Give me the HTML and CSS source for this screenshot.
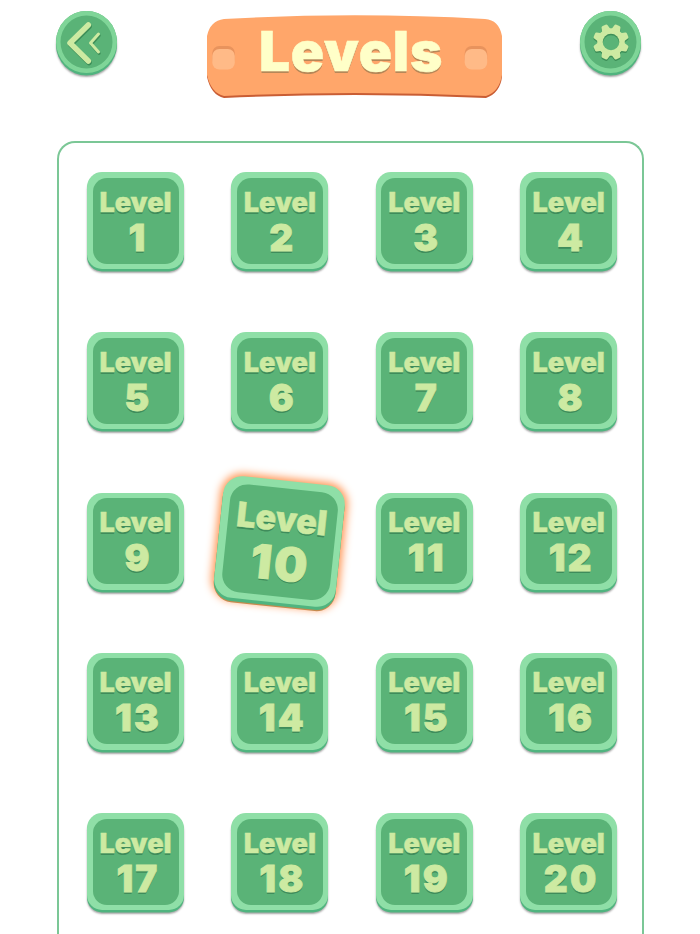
FILE: index.html
```
<!DOCTYPE html>
<html lang="en">
<head>
    <meta charset="UTF-8">
    <title>Levels</title>
    <link rel="stylesheet" href="styles.css">
</head>
<body>
    <header class="top-bar">
        <button class="round-btn" aria-label="Back">
            <svg width="61" height="62" viewBox="0 0 61 62" fill="none" stroke-linecap="round" stroke-linejoin="round">
                <g stroke="#3d8e58" transform="translate(0.7 1.5)">
                    <path d="M32.300 14L14 32L32.300 50" stroke-width="5.500"/>
                    <path d="M42.500 23L34.500 32L42.500 41" stroke-width="3"/>
                </g>
                <g stroke="#cdeaa2">
                    <path d="M32.300 14L14 32L32.300 50" stroke-width="5.500"/>
                    <path d="M42.500 23L34.500 32L42.500 41" stroke-width="3"/>
                </g>
            </svg>
        </button>
        <div class="banner">
            <svg class="banner-board" width="296" height="85" viewBox="0 0 296 85">
                <path d="M17 8Q148 -1 278 8Q295 9 295 33V63Q293 79 279 84Q148 78 17 84Q4 81 0 63V33Q1 10 17 8Z" fill="#c95d34"/>
                <path d="M17 5Q148 -2.500 278 5Q292 6 295 22V61Q292 78 279 82Q148 76 17 82Q4 79 0 61V22Q3 7 17 5Z" fill="#ffa66a"/>
                <rect x="5.300" y="32" width="22.500" height="20" rx="7" fill="#e8935d"/>
                <rect x="5.300" y="35" width="22.500" height="20.500" rx="7" fill="#ffba87"/>
                <rect x="257.700" y="32" width="22.500" height="20" rx="7" fill="#e8935d"/>
                <rect x="257.700" y="35" width="22.500" height="20.500" rx="7" fill="#ffba87"/>
            </svg>
            <h1 class="banner-title">Levels</h1>
        </div>
        <button class="round-btn" aria-label="Settings">
            <svg width="61" height="62" viewBox="0 0 61 62">
                <defs>
                    <mask id="hole">
                        <rect width="61" height="62" fill="#fff"/>
                        <circle cx="31" cy="31" r="8.300" fill="#000"/>
                    </mask>
                    <g id="gear" mask="url(#hole)">
                        <circle cx="31" cy="31" r="13.800"/>
                        <path id="tooth" d="M26.500 19L27.700 14.200Q28 13 29.500 13H32.500Q34 13 34.300 14.200L35.500 19V43L34.300 47.800Q34 49 32.500 49H29.500Q28 49 27.700 47.800L26.500 43Z" transform="rotate(22.5 31 31)"/>
                        <use href="#tooth" transform="rotate(45 31 31)"/>
                        <use href="#tooth" transform="rotate(90 31 31)"/>
                        <use href="#tooth" transform="rotate(135 31 31)"/>
                    </g>
                </defs>
                <use href="#gear" fill="#3d8e58" y="1.500"/>
                <use href="#gear" fill="#cdeaa2"/>
            </svg>
        </button>
    </header>
    <main class="levels">
        <button class="level"><span class="face"><span class="label">Level</span><span class="num">1</span></span></button>
        <button class="level"><span class="face"><span class="label">Level</span><span class="num">2</span></span></button>
        <button class="level"><span class="face"><span class="label">Level</span><span class="num">3</span></span></button>
        <button class="level"><span class="face"><span class="label">Level</span><span class="num">4</span></span></button>
        <button class="level"><span class="face"><span class="label">Level</span><span class="num">5</span></span></button>
        <button class="level"><span class="face"><span class="label">Level</span><span class="num">6</span></span></button>
        <button class="level"><span class="face"><span class="label">Level</span><span class="num">7</span></span></button>
        <button class="level"><span class="face"><span class="label">Level</span><span class="num">8</span></span></button>
        <button class="level"><span class="face"><span class="label">Level</span><span class="num">9</span></span></button>
        <button class="level active"><span class="face"><span class="label">Level</span><span class="num">10</span></span></button>
        <button class="level"><span class="face"><span class="label">Level</span><span class="num">11</span></span></button>
        <button class="level"><span class="face"><span class="label">Level</span><span class="num">12</span></span></button>
        <button class="level"><span class="face"><span class="label">Level</span><span class="num">13</span></span></button>
        <button class="level"><span class="face"><span class="label">Level</span><span class="num">14</span></span></button>
        <button class="level"><span class="face"><span class="label">Level</span><span class="num">15</span></span></button>
        <button class="level"><span class="face"><span class="label">Level</span><span class="num">16</span></span></button>
        <button class="level"><span class="face"><span class="label">Level</span><span class="num">17</span></span></button>
        <button class="level"><span class="face"><span class="label">Level</span><span class="num">18</span></span></button>
        <button class="level"><span class="face"><span class="label">Level</span><span class="num">19</span></span></button>
        <button class="level"><span class="face"><span class="label">Level</span><span class="num">20</span></span></button>
    </main>
</body>
</html>
```

FILE: styles.css
```
* {
    box-sizing: border-box;
}
body {
    display: flex;
    flex-direction: column;
    margin: 0;
    height: 934px;
    overflow: hidden;
    background: #fff;
    font-family: Inter, "Liberation Sans", Arial, sans-serif;
    font-weight: 900;
}
button {
    padding: 0;
    border: none;
    font: inherit;
    cursor: pointer;
}
.top-bar {
    display: flex;
    justify-content: space-between;
    align-items: flex-start;
    flex: none;
    height: 141px;
    padding: 11px 59px 0 56px;
}
.round-btn {
    width: 61px;
    height: 62px;
    border-radius: 50%;
    background: #5ab377;
    box-shadow: inset 0 0 0 4.5px #7fd598, 0 2.5px 0 #50b47f, 0 4px 2px rgba(0, 0, 0, 0.35);
}
.round-btn svg {
    display: block;
}
.banner {
    display: grid;
    width: 296px;
    margin: 3px 0 0 12px;
}
.banner-board,
.banner-title {
    grid-area: 1 / 1;
}
.banner-title {
    margin: 5px 0 0;
    padding-right: 7px;
    font-size: 55px;
    font-weight: 900;
    line-height: 64px;
    letter-spacing: 0.8px;
    text-align: center;
    color: #ffffc8;
    -webkit-text-stroke: 0.6px #ffffc8;
    text-shadow: 0 2px 0 #b58758;
}
.levels {
    display: grid;
    grid-template-columns: repeat(4, 97px);
    grid-auto-rows: 97px;
    column-gap: 47.4px;
    row-gap: 63.3px;
    flex: 1;
    width: 587px;
    min-height: 0;
    margin-left: 57px;
    padding: 29px 0 0 28px;
    border: 2px solid #7bc796;
    border-bottom: none;
    border-radius: 18px 18px 0 0;
}
.level {
    padding: 5.5px;
    border-radius: 15px;
    background: #8fdfa7;
    box-shadow: 0 2.5px 0 #50b47f, 0 4px 2px rgba(0, 0, 0, 0.35);
}
.face {
    display: flex;
    flex-direction: column;
    align-items: center;
    height: 100%;
    padding-top: 14px;
    border-radius: 14px;
    background: #5ab377;
    color: #cdeaa2;
    text-shadow: 0 1.5px 0 #3f8c5b;
}
.label {
    font-size: 27px;
    line-height: 22px;
    -webkit-text-stroke: 0.4px #cdeaa2;
}
.num {
    margin-top: 2px;
    padding-left: 5px;
    font-size: 37px;
    line-height: 44px;
    letter-spacing: 2.2px;
    -webkit-text-stroke: 0.8px #cdeaa2;
}
.active {
    transform: rotate(6deg) scale(1.26);
    box-shadow: 0 2.5px 0 #50b47f, 0 3.5px 0 #c58a4e, 0 0 7px 2px #ff914d;
}
```
